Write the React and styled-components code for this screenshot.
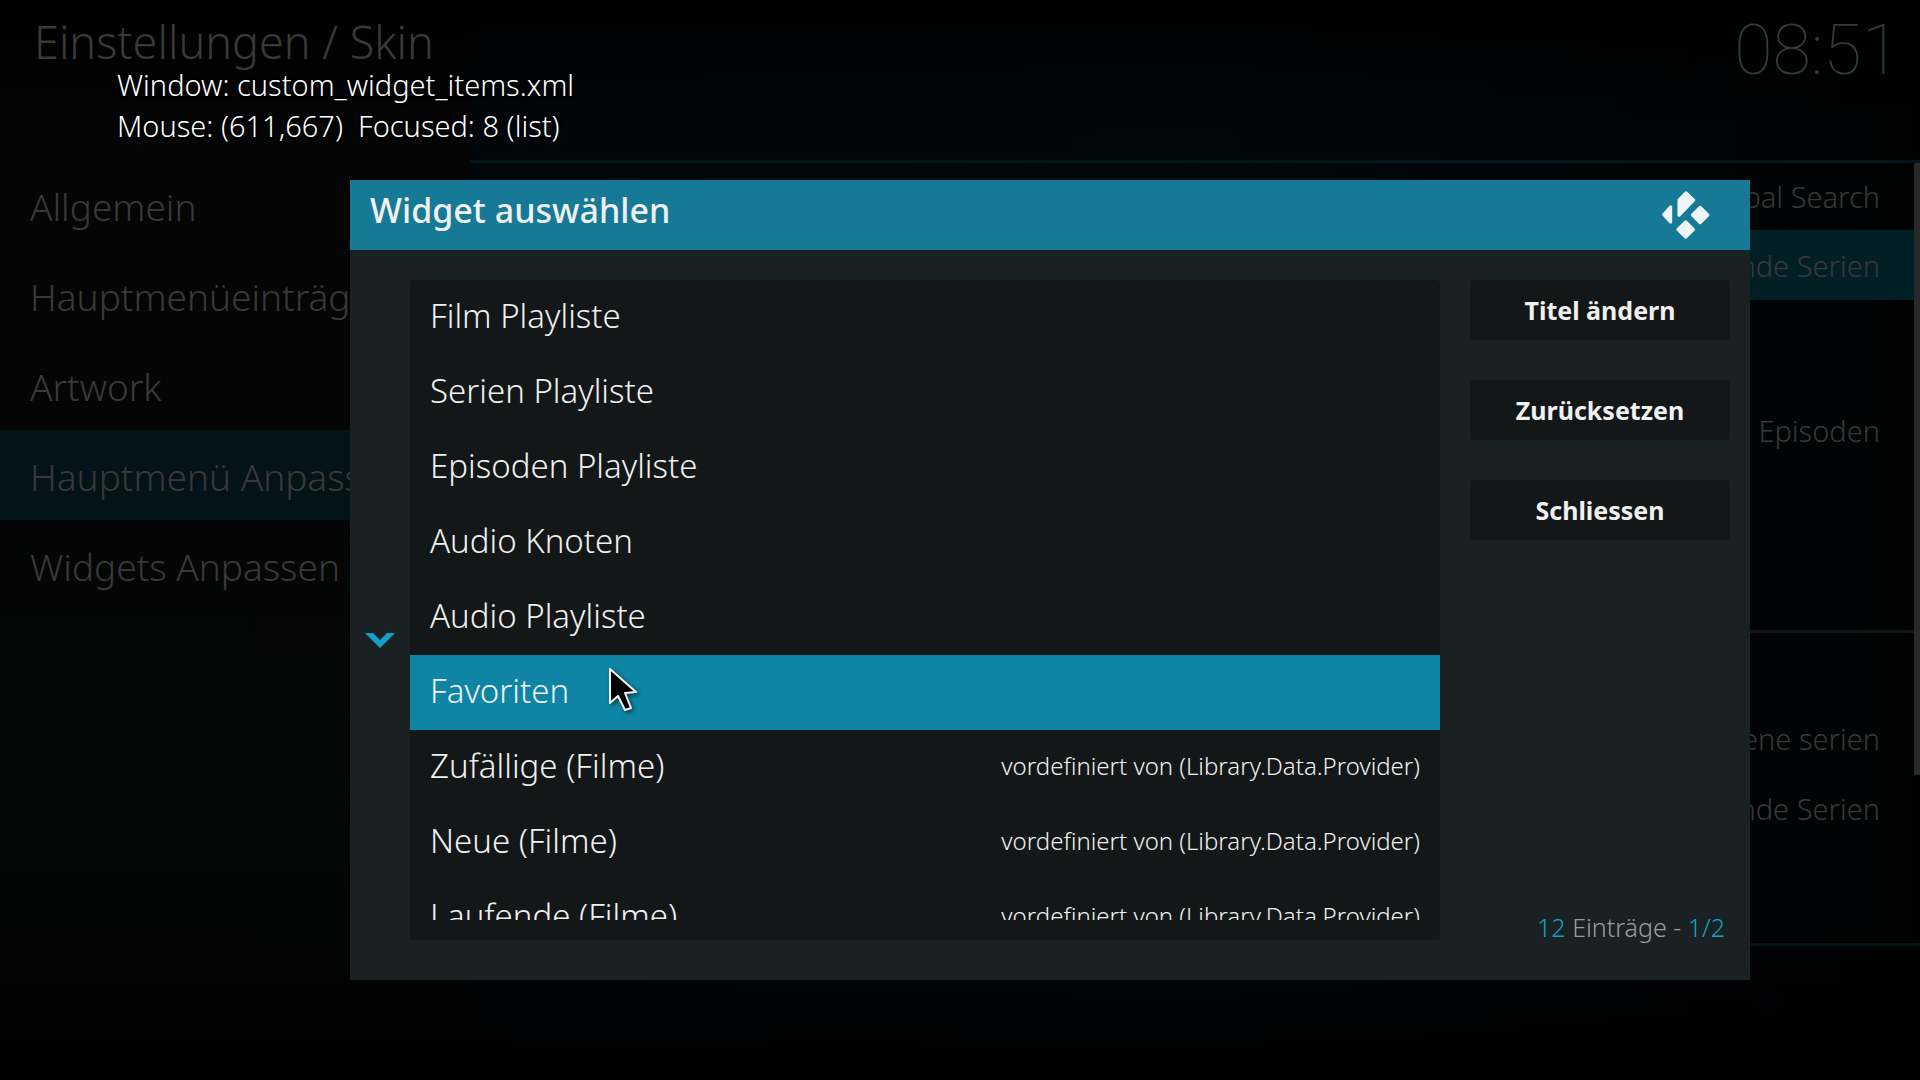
import React from "react";
import styled, { createGlobalStyle, css } from "styled-components";

const GlobalStyle = createGlobalStyle`
    * {
        box-sizing: border-box;
    }
    body {
        margin: 0;
        background: #000000;
        font-family: "Noto Sans", "Open Sans", sans-serif;
        font-weight: 300;
    }
    button {
        border: none;
        padding: 0;
        background: none;
        color: inherit;
        font: inherit;
        cursor: inherit;
    }
    ul {
        list-style: none;
        margin: 0;
        padding: 0;
    }
`
const Screen = styled.div`
    position: relative;
    min-height: 100vh;
    display: grid;
    grid-template-columns: 470px 1fr;
    overflow: hidden;
    color: #393939;
`
const Sidebar = styled.nav`
    background: linear-gradient(180deg, #000000 0, #050505 160px, #050606 860px, #000000 100%);
`
const Breadcrumb = styled.h1`
    margin: 0;
    height: 160px;
    padding: 12px 34px;
    font-size: 45px;
    font-weight: 300;
    line-height: 60px;
    white-space: nowrap;
`
const SidebarItem = styled.button`
    display: block;
    width: 100%;
    height: 90px;
    padding: 2px 30px 0;
    font-size: 37px;
    text-align: left;
    white-space: nowrap;
    ${({$active}) => $active && css`
        background: #031317;
    `}
`
const Main = styled.main`
    display: flex;
    flex-direction: column;
    background:
        linear-gradient(180deg, #000000 0, transparent 140px, transparent 900px, #000000 100%),
        linear-gradient(90deg, #000609 0, #00080b 50%, #000405 85%, #000202 100%);
`
const TopBar = styled.header`
    height: 160px;
    padding: 8px 20px;
    text-align: right;
`
const Clock = styled.time`
    font-family: Roboto, sans-serif;
    font-size: 70px;
    font-weight: 100;
    line-height: 84px;
`
const Content = styled.div`
    flex: 1;
    display: flex;
    align-items: flex-start;
    border-top: 3px solid #03161b;
    border-bottom: 3px solid #021418;
    margin-bottom: 134px;
`
const Options = styled.div`
    flex: 1;
`
const OptionGroup = styled.ul`
    padding-bottom: 95px;
    &:first-child li:first-child button {
        height: 67px;
    }
    ${({$ruled}) => $ruled && css`
        padding-bottom: 72px;
        border-top: 3px solid #151515;
        margin-top: 70px;
        padding-top: 70px;
    `}
`
const Option = styled.button`
    display: block;
    width: 100%;
    height: 70px;
    padding: 0 34px;
    font-size: 29px;
    text-align: right;
    ${({$active}) => $active && css`
        background: #021f26;
    `}
`
const ScrollThumb = styled.div`
    width: 6px;
    height: 612px;
    background: #292929;
`
const DebugInfo = styled.div`
    position: absolute;
    top: 64px;
    left: 117px;
    color: #ffffff;
    font-size: 29px;
    line-height: 41px;
    white-space: pre;
    text-shadow: 0 0 3px #000000, 1px 1px 2px #000000;
`
const Overlay = styled.div`
    position: absolute;
    inset: 0;
    padding: 180px 170px 0 350px;
`
const Dialog = styled.section`
    background: #1a2123;
    color: #f0f0f0;
`
const DialogHeader = styled.header`
    display: flex;
    justify-content: space-between;
    align-items: center;
    height: 70px;
    padding: 0 40px 0 20px;
    background: #167a97;
`
const DialogTitle = styled.h2`
    margin: 0;
    padding-bottom: 10px;
    font-size: 34px;
    font-weight: 500;
    line-height: 46px;
`
const DialogBody = styled.div`
    display: grid;
    grid-template-columns: 60px 1fr 260px;
    padding: 30px 20px 40px 0;
`
const Arrows = styled.div`
    display: grid;
    grid-template-rows: 60px 62px;
    align-content: center;
`
const ArrowButton = styled.button`
    grid-row: 2;
    display: flex;
    justify-content: center;
    align-items: center;
`
const ListPanel = styled.div`
    padding-bottom: 20px;
    margin-right: 30px;
    border-radius: 4px;
    background: #141718;
`
const List = styled.ul`
    height: 640px;
    overflow: hidden;
`
const ListItem = styled.button`
    display: flex;
    justify-content: space-between;
    align-items: center;
    width: 100%;
    height: 75px;
    padding: 0 20px 4px;
    font-size: 33px;
    text-align: left;
    ${({$focused}) => $focused && css`
        background: #0f85a5;
    `}
`
const Source = styled.span`
    font-size: 24px;
`
const Actions = styled.div`
    display: flex;
    flex-direction: column;
    gap: 40px;
`
const ActionButton = styled.button`
    height: 60px;
    border-radius: 4px;
    background: #141718;
    font-size: 25px;
    font-weight: 700;
`
const Count = styled.p`
    margin: auto 0 -4px;
    padding-right: 5px;
    color: #9d9d9d;
    font-size: 25px;
    line-height: 34px;
    text-align: right;
`
const Accent = styled.span`
    color: #12a0c7;
`
const Pointer = styled.svg`
    position: absolute;
    top: 665px;
    left: 607px;
    filter: drop-shadow(2px 2px 2px rgba(0, 0, 0, 0.5));
`

const categories = ["Allgemein", "Hauptmenüeinträge", "Artwork", "Hauptmenü Anpassen", "Widgets Anpassen"];
const optionGroups = [
    { items: ["Global Search", "Laufende Serien"] },
    { items: ["Episoden"] },
    { items: ["Gesehene serien", "Laufende Serien"], ruled: true },
];
const provider = "vordefiniert von (Library.Data.Provider)";
const widgets = [
    { name: "Film Playliste" },
    { name: "Serien Playliste" },
    { name: "Episoden Playliste" },
    { name: "Audio Knoten" },
    { name: "Audio Playliste" },
    { name: "Favoriten" },
    { name: "Zufällige (Filme)", source: provider },
    { name: "Neue (Filme)", source: provider },
    { name: "Laufende (Filme)", source: provider },
];
const actions = ["Titel ändern", "Zurücksetzen", "Schliessen"];

const KodiLogo = () => (
    <svg width="48" height="48" viewBox="66 62 144 146" fill="#edf5f8" stroke="#edf5f8" strokeWidth="10" strokeLinejoin="round" aria-hidden="true">
        <path d="M138 68 L161 90 L117 135 V90 Z" />
        <path d="M91 111 V156 L71 134 Z" />
        <path d="M181 112 L204 135 L181 158 L158 135 Z" />
        <path d="M137 156 L160 179 L137 202 L114 179 Z" />
    </svg>
)

const App = () => {
    const [focused, setFocused] = React.useState(5);

    return (
        <>
            <GlobalStyle />
            <Screen>
                <Sidebar>
                    <Breadcrumb>Einstellungen / Skin</Breadcrumb>
                    {categories.map((item, index) => (
                        <SidebarItem key={item} $active={index === 3}>{item}</SidebarItem>
                    ))}
                </Sidebar>
                <Main>
                    <TopBar>
                        <Clock>08:51</Clock>
                    </TopBar>
                    <Content>
                        <Options>
                            {optionGroups.map((group, groupIndex) => (
                                <OptionGroup key={groupIndex} $ruled={group.ruled}>
                                    {group.items.map((item, index) => (
                                        <li key={item}>
                                            <Option $active={groupIndex === 0 && index === 1}>{item}</Option>
                                        </li>
                                    ))}
                                </OptionGroup>
                            ))}
                        </Options>
                        <ScrollThumb />
                    </Content>
                </Main>
                <Overlay>
                    <Dialog role="dialog" aria-labelledby="dialog-title">
                        <DialogHeader>
                            <DialogTitle id="dialog-title">Widget auswählen</DialogTitle>
                            <KodiLogo />
                        </DialogHeader>
                        <DialogBody>
                            <Arrows>
                                <ArrowButton aria-label="Nach unten">
                                    <svg width="30" height="15" viewBox="0 0 30 15" fill="#12a0c7">
                                        <path d="M0 0 H8 L15 7 L22 0 H30 L15 15 Z" />
                                    </svg>
                                </ArrowButton>
                            </Arrows>
                            <ListPanel>
                                <List>
                                    {widgets.map((item, index) => (
                                        <li key={item.name}>
                                            <ListItem $focused={index === focused} onClick={() => setFocused(index)}>
                                                {item.name}
                                                {item.source && <Source>{item.source}</Source>}
                                            </ListItem>
                                        </li>
                                    ))}
                                </List>
                            </ListPanel>
                            <Actions>
                                {actions.map((item) => (
                                    <ActionButton key={item}>{item}</ActionButton>
                                ))}
                                <Count>
                                    <Accent>12</Accent> Einträge - <Accent>1/2</Accent>
                                </Count>
                            </Actions>
                        </DialogBody>
                    </Dialog>
                </Overlay>
                <DebugInfo>
                    <div>Window: custom_widget_items.xml</div>
                    <div>{"Mouse: (611,667)  Focused: 8 (list)"}</div>
                </DebugInfo>
                <Pointer width="34" height="50" viewBox="0 0 34 50" aria-hidden="true">
                    <path d="M3 4 L29 27 L18 28 L24 43 L18 45 L11 31 L3 38 Z" fill="#000000" stroke="#f4f4f4" strokeWidth="2" strokeLinejoin="round" />
                </Pointer>
            </Screen>
        </>
    );
}
export default App;
